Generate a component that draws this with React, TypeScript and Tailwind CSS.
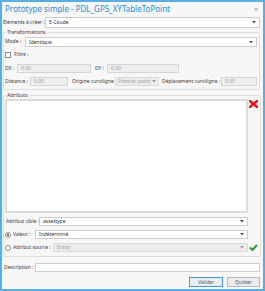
import React from 'react';

function Caret({ dim }: { dim?: boolean }) {
  return (
    <svg width="4" height="3" viewBox="0 0 4 3" className="shrink-0">
      <path d="M0 0 H4 L2 2.5 Z" fill={dim ? '#9a9a9a' : '#555'} />
    </svg>
  );
}

function Combo({ value, disabled, className = '' }: { value: string; disabled?: boolean; className?: string }) {
  return (
    <div
      className={`flex items-center justify-between gap-[1px] px-[2px] border overflow-hidden ${
        disabled ? 'bg-[#ececec] border-[#dadada] text-[#a3a3a3]' : 'bg-white border-[#cdcdcd] text-[#333]'
      } ${className}`}
    >
      <span className="leading-none whitespace-nowrap">{value}</span>
      <Caret dim={disabled} />
    </div>
  );
}

function Field({ value, className = '' }: { value: string; className?: string }) {
  return (
    <div className={`flex items-center px-[3px] border border-[#d4d4d4] bg-[#efefef] text-[#9a9a9a] leading-none ${className}`}>
      {value}
    </div>
  );
}

function Radio({ checked }: { checked?: boolean }) {
  return (
    <div className="w-[6px] h-[6px] rounded-full border border-[#8a8a8a] bg-white flex items-center justify-center shrink-0">
      {checked && <div className="w-[2px] h-[2px] rounded-full bg-[#333]" />}
    </div>
  );
}

export default function App() {
  return (
    <div className="w-[265px] h-[291px] border-2 border-[#5aaee4] bg-[#f7f7f7] flex flex-col font-['Noto_Sans',sans-serif] text-[5px] text-[#3a3a3a] overflow-hidden">
      {/* Title */}
      <div className="h-[14px] flex items-center justify-between pl-[3px] pr-[5px]">
        <span className="text-[8px] text-[#2a8bd2] leading-none">Prototype simple - PDL_GPS_XYTableToPoint</span>
        <span className="text-[7px] text-[#8a8a8a] leading-none">×</span>
      </div>

      <div className="flex flex-col pl-[1px] pr-[3px]">
        {/* Eléments à créer */}
        <div className="h-[11px] mt-[1px] flex items-center">
          <span className="w-[42px] shrink-0">Eléments à créer :</span>
          <Combo value="E-Coude" className="flex-1 h-full px-[3px]" />
        </div>

        {/* Transformations */}
        <fieldset className="mt-[2px] h-[60px] border border-[#dedede] rounded-[2px] px-[1px]">
          <legend className="px-[1px] leading-none ml-[1px]">Transformations</legend>
          <div className="h-[10px] mt-[2px] flex items-center">
            <span className="w-[20px] shrink-0">Mode :</span>
            <Combo value="Identique" className="flex-1 h-full mr-[1px] px-[3px]" />
          </div>
          <div className="h-[10px] mt-[3px] flex items-center gap-[3px]">
            <div className="w-[6px] h-[6px] border border-[#8a8a8a] bg-white" />
            <span>Filtre :</span>
          </div>
          <div className="h-[9px] mt-[4px] flex items-center">
            <span className="w-[12px] shrink-0">DX :</span>
            <Field value="0.00" className="w-[74px] h-full" />
            <span className="w-[12px] ml-[4px] shrink-0">DY :</span>
            <Field value="0.00" className="w-[72px] h-full" />
          </div>
          <div className="h-[9px] mt-[4px] flex items-center">
            <span className="w-[25px] shrink-0">Distance :</span>
            <Field value="0.00" className="w-[38px] h-full" />
            <span className="ml-[4px] w-[43px] shrink-0 whitespace-nowrap">Origine curviligne :</span>
            <Combo value="Premier point" disabled className="w-[44px] h-full shrink-0" />
            <span className="ml-[3px] w-[59px] shrink-0 whitespace-nowrap">Déplacement curviligne :</span>
            <Field value="0.00" className="flex-1 h-full mr-[1px]" />
          </div>
        </fieldset>

        {/* Attributs */}
        <fieldset className="mt-[3px] h-[164px] border border-[#dedede] rounded-[2px] px-[1px] mr-[-1px]">
          <legend className="px-[1px] leading-none ml-[1px]">Attributs</legend>
          <div className="flex mt-[1px]">
            <div className="w-[243px] h-[114px] border-2 border-[#dcdcdc] bg-white" />
            <div className="flex-1 flex justify-center pt-[1px]">
              <svg width="9" height="8" viewBox="0 0 9 8">
                <path d="M1 1 L8 7 M8 1 L1 7" stroke="#e8141b" strokeWidth="2.4" strokeLinecap="square" />
              </svg>
            </div>
          </div>
          <div className="h-[9px] mt-[4px] flex items-center w-[243px]">
            <span className="w-[34px] shrink-0 pl-[1px]">Attribut cible :</span>
            <Combo value="assettype" className="flex-1 h-full px-[3px]" />
          </div>
          <div className="h-[9px] mt-[4px] flex items-center w-[243px]">
            <Radio checked />
            <span className="w-[22px] shrink-0 ml-[2px]">Valeur :</span>
            <Combo value="Indéterminé" className="flex-1 h-full px-[3px]" />
          </div>
          <div className="h-[9px] mt-[4px] flex items-center">
            <div className="w-[243px] flex items-center h-full">
              <Radio />
              <span className="w-[40px] shrink-0 ml-[2px]">Attribut source :</span>
              <Combo value="Entity" disabled className="flex-1 h-full px-[3px]" />
            </div>
            <div className="flex-1 flex justify-center">
              <svg width="9" height="7" viewBox="0 0 9 7">
                <path d="M1 3.5 L3.5 6 L8 1" stroke="#2f9a2f" strokeWidth="2" fill="none" />
              </svg>
            </div>
          </div>
        </fieldset>

        {/* Description */}
        <div className="h-[9px] mt-[6px] flex items-center">
          <span className="w-[32px] shrink-0 pl-[1px]">Description :</span>
          <div className="flex-1 h-full border border-[#cdcdcd] bg-white" />
        </div>

        {/* Buttons */}
        <div className="h-[10px] mt-[5px] flex justify-end gap-[4px]">
          <button className="w-[34px] h-full border border-[#3d9ad8] bg-[#e9eef3] text-[5px] leading-none text-[#555]">
            Valider
          </button>
          <button className="w-[33px] h-full border border-[#b9b9b9] bg-[#ececec] text-[5px] leading-none text-[#555]">
            Quitter
          </button>
        </div>
      </div>
    </div>
  );
}
